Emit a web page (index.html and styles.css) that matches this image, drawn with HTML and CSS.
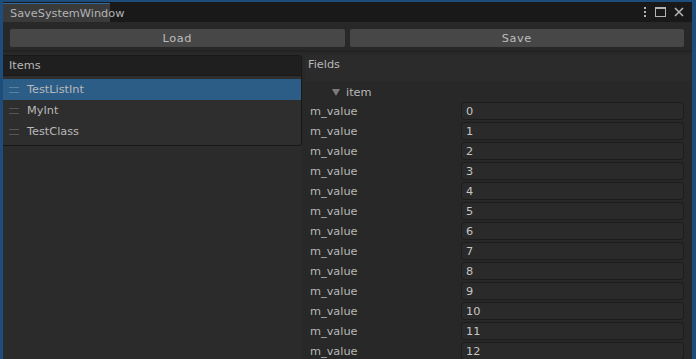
FILE: index.html
```html
<!DOCTYPE html>
<html>
<head>
  <meta charset="UTF-8">
  <title>SaveSystemWindow</title>
  <link rel="stylesheet" href="styles.css">
</head>
<body>
  <div class="window">
    <div class="tabbar">
      <div class="tab">SaveSystemWindow</div>
      <div class="tab-icons">
        <svg width="4" height="12" viewBox="0 0 4 12"><rect x="1" y="1" width="2" height="2" fill="#b4b4b4"/><rect x="1" y="5" width="2" height="2" fill="#b4b4b4"/><rect x="1" y="9" width="2" height="2" fill="#b4b4b4"/></svg>
        <svg width="11" height="10" viewBox="0 0 11 10"><rect x="0.5" y="0.5" width="10" height="9" fill="none" stroke="#b4b4b4"/><rect x="0" y="0" width="11" height="2" fill="#b4b4b4"/></svg>
        <svg width="10" height="10" viewBox="0 0 10 10"><path d="M1 1L9 9M9 1L1 9" stroke="#b4b4b4" stroke-width="1.6"/></svg>
      </div>
    </div>

    <div class="toolbar">
      <button class="btn">Load</button>
      <button class="btn">Save</button>
    </div>

    <div class="main">
      <div class="left">
        <div class="list">
          <div class="list-header">Items</div>
          <div class="list-body">
            <div class="list-item selected"><span class="handle"></span>TestListInt</div>
            <div class="list-item"><span class="handle"></span>MyInt</div>
            <div class="list-item"><span class="handle"></span>TestClass</div>
          </div>
        </div>
      </div>

      <div class="right">
        <div class="fields-header">Fields</div>
        <div class="fields">
          <div class="foldout"><span class="arrow"></span>item</div>
          <div class="row"><span class="label">m_value</span><div class="input">0</div></div>
          <div class="row"><span class="label">m_value</span><div class="input">1</div></div>
          <div class="row"><span class="label">m_value</span><div class="input">2</div></div>
          <div class="row"><span class="label">m_value</span><div class="input">3</div></div>
          <div class="row"><span class="label">m_value</span><div class="input">4</div></div>
          <div class="row"><span class="label">m_value</span><div class="input">5</div></div>
          <div class="row"><span class="label">m_value</span><div class="input">6</div></div>
          <div class="row"><span class="label">m_value</span><div class="input">7</div></div>
          <div class="row"><span class="label">m_value</span><div class="input">8</div></div>
          <div class="row"><span class="label">m_value</span><div class="input">9</div></div>
          <div class="row"><span class="label">m_value</span><div class="input">10</div></div>
          <div class="row"><span class="label">m_value</span><div class="input">11</div></div>
          <div class="row"><span class="label">m_value</span><div class="input">12</div></div>
        </div>
      </div>
    </div>
  </div>
</body>
</html>
```

FILE: styles.css
```css
html, body {
  margin: 0;
  height: 100%;
  overflow: hidden;
}
body {
  background-color: #1d4d7c;
  padding: 2px 2px 0 3px;
  box-sizing: border-box;
  font-family: "DejaVu Sans", Verdana, sans-serif;
  font-size: 11.3px;
  color: #b9b9b9;
}
.window {
  height: 100%;
  margin-right: 2px;
  background-color: #282828;
  display: flex;
  flex-direction: column;
  overflow: hidden;
}
.tabbar {
  flex-shrink: 0;
  height: 20px;
  background-color: #191919;
  display: flex;
  justify-content: space-between;
  align-items: flex-end;
}
.tab {
  width: 107px;
  height: 19px;
  background-color: #3a3a3a;
  border-top: 1px solid #2e6a9e;
  padding-left: 7px;
  box-sizing: border-box;
  line-height: 19px;
  color: #b4b4b4;
}
.tab-icons {
  align-self: center;
  display: flex;
  align-items: center;
  gap: 8px;
  padding-right: 8px;
}
.toolbar {
  flex-shrink: 0;
  height: 30px;
  display: flex;
  gap: 5px;
  padding: 7px 8px 0 7px;
  box-sizing: border-box;
  border-bottom: 2px solid #232323;
}
.btn {
  flex: 1;
  height: 18px;
  padding: 0;
  background-color: #474747;
  border: none;
  border-radius: 2px;
  color: #bdbdbd;
  font-family: inherit;
  font-size: 11.3px;
  letter-spacing: 0.6px;
}
.main {
  flex: 1;
  min-height: 0;
  display: flex;
  padding-top: 3px;
}
.left {
  width: 299px;
  background-color: #2b2b2b;
}
.list {
  border: 1px solid #181818;
  border-left: none;
  border-radius: 0 3px 3px 0;
  background-color: #2e2e2e;
  padding-bottom: 3px;
}
.list-header {
  height: 19px;
  line-height: 19px;
  padding-left: 6px;
  background-color: #1f1f1f;
  border-bottom: 1px solid #191919;
}
.list-body {
  padding-top: 3px;
}
.list-item {
  height: 21px;
  display: flex;
  align-items: center;
  padding-left: 6px;
  color: #b9b9b9;
}
.list-item.selected {
  background-color: #2c5d87;
}
.handle {
  width: 10px;
  height: 4px;
  border-top: 1px solid #555555;
  border-bottom: 1px solid #555555;
  margin-right: 8px;
}
.selected .handle {
  border-color: #5a7f9f;
}
.right {
  flex: 1;
  padding-left: 3px;
}
.fields-header {
  height: 26px;
  line-height: 20px;
  padding-left: 3px;
  background-color: #2b2b2b;
}
.fields {
  padding: 3px 8px 0 5px;
}
.foldout {
  height: 17px;
  display: flex;
  align-items: center;
  padding-left: 22px;
}
.arrow {
  width: 0;
  height: 0;
  border-left: 4px solid transparent;
  border-right: 4px solid transparent;
  border-top: 7px solid #7c7c7c;
  margin-right: 6px;
}
.row {
  height: 20px;
  display: flex;
  align-items: center;
}
.label {
  width: 151px;
}
.input {
  flex: 1;
  height: 18px;
  line-height: 17px;
  box-sizing: border-box;
  background-color: #2a2a2a;
  border: 1px solid #1d1d1d;
  border-radius: 3px;
  padding-left: 4px;
  color: #c6c6c6;
}
```
